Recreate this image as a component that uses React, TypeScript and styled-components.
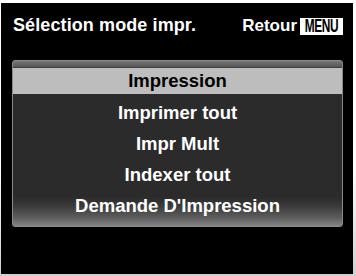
import React from "react";
import styled, { createGlobalStyle } from "styled-components";

const Global = createGlobalStyle`
  html, body { margin: 0; padding: 0; background: #ffffff; }
  body { width: 356px; height: 276px; overflow: hidden; font-family: "Liberation Sans", Arial, sans-serif; }
`;

const Frame = styled.div`
  width: 356px;
  height: 276px;
  box-sizing: border-box;
  padding: 3px 3px 2px 1px;
  background: linear-gradient(#ffffff, #ffffff 60%, #d0d0d0);
`;

const Screen = styled.div`
  height: 100%;
  background: #000;
  box-sizing: border-box;
  padding: 0 10px 0 11px;
  display: flex;
  flex-direction: column;
`;

const Header = styled.div`
  height: 57px;
  display: flex;
  align-items: flex-start;
  justify-content: space-between;
  padding: 12px 0 0 1px;
  box-sizing: border-box;
`;

const Title = styled.div`
  color: #fff;
  font-weight: bold;
  font-size: 18px;
  line-height: 21px;
  letter-spacing: 0.1px;
`;

const Back = styled.div`
  display: flex;
  align-items: center;
  gap: 3px;
  color: #fff;
  font-weight: bold;
  font-size: 17px;
  line-height: 21px;
`;

const MenuTag = styled.span`
  background: #fff;
  color: #000;
  font-weight: bold;
  font-size: 18px;
  line-height: 17px;
  height: 17px;
  width: 43px;
  display: inline-flex;
  justify-content: center;
  align-items: center;
  overflow: hidden;
  box-sizing: border-box;
  margin-top: 1px;
`;

const MenuText = styled.span`
  display: inline-block;
  transform: scaleX(0.66);
  transform-origin: center;
  letter-spacing: -0.5px;
  margin-top: 1px;
`;

const Panel = styled.div`
  width: 331px;
  height: 167px;
  box-sizing: border-box;
  border: 1px solid #8a8a8a;
  border-radius: 3px;
  background: linear-gradient(
    to bottom,
    #777 0px,
    #555 6px,
    #2b2b2b 7px,
    #2b2b2b 136px,
    #3a3a3a 145px,
    #5e5e5e 157px,
    #8a8a8a 166px
  );
  padding-top: 7px;
  display: flex;
  flex-direction: column;
  overflow: hidden;
`;

const Row = styled.div<{ $active?: boolean }>`
  height: ${(p) => (p.$active ? 26 : 31)}px;
  margin-bottom: ${(p) => (p.$active ? 3 : 0)}px;
  display: flex;
  align-items: center;
  justify-content: center;
  font-weight: bold;
  font-size: 18.5px;
  color: ${(p) => (p.$active ? "#000" : "#fff")};
  background: ${(p) => (p.$active ? "#bdbdbd" : "transparent")};
`;

const items = [
  "Impression",
  "Imprimer tout",
  "Impr Mult",
  "Indexer tout",
  "Demande D'Impression",
];

export default function App() {
  return (
    <>
      <Global />
      <Frame>
        <Screen>
          <Header>
            <Title>Sélection mode impr.</Title>
            <Back>
              Retour
              <MenuTag>
                <MenuText>MENU</MenuText>
              </MenuTag>
            </Back>
          </Header>
          <Panel>
            {items.map((t, i) => (
              <Row key={t} $active={i === 0}>
                {t}
              </Row>
            ))}
          </Panel>
        </Screen>
      </Frame>
    </>
  );
}
